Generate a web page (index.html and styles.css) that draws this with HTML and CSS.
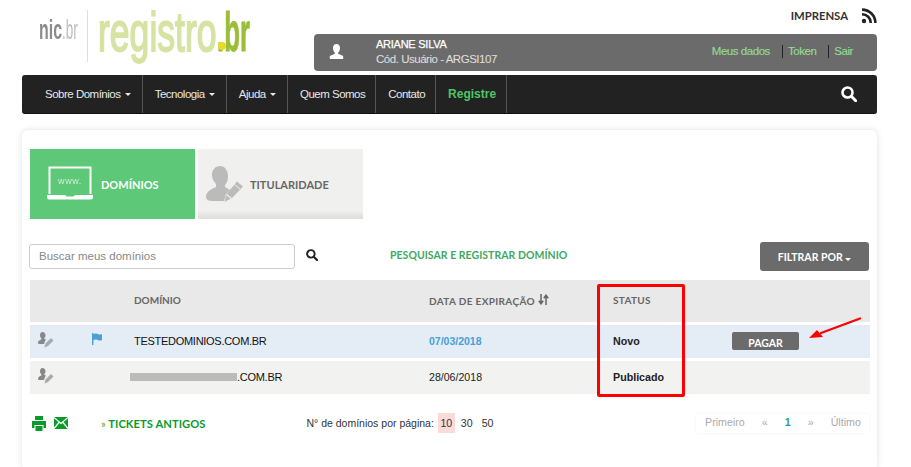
FILE: index.html
```html
<!DOCTYPE html>
<html lang="pt-BR">
<head>
<meta charset="utf-8">
<title>Registro.br</title>
<link rel="stylesheet" href="styles.css">
</head>
<body>
<div class="page">
  <header class="top">
    <div class="logo" aria-label="nic.br registro.br">
      <span class="lg-box w-nic"><span class="lg l-nic">nic</span></span>
      <span class="lg-box w-nicbr"><span class="lg l-nicbr">.br</span></span>
      <i class="l-div"></i>
      <span class="lg-box w-reg"><span class="lg l-reg">registro</span></span>
      <span class="lg-box w-br"><span class="lg l-br">.br</span><i class="l-dot"></i></span>
    </div>
    <div class="top-right">
      <div class="press">
        <span>IMPRENSA</span>
        <svg width="16" height="16" viewBox="0 0 16 16"><circle cx="3" cy="13" r="2.2" fill="#222"/><path d="M1 6.200a8.800 8.800 0 0 1 8.800 8.800" fill="none" stroke="#222" stroke-width="2.600"/><path d="M1 1.600A13.400 13.400 0 0 1 14.400 15" fill="none" stroke="#222" stroke-width="2.600"/></svg>
      </div>
      <div class="user">
        <svg class="user-icon" width="15" height="15" viewBox="0 0 15 15"><path d="M7.500 0C5 0 4 2 4 4.200c0 1.800.8 3.300 1.800 4.200v1.300L.8 12v3h13.400v-3l-5-2.300V8.400C10.200 7.500 11 6 11 4.200 11 2 10 0 7.500 0z" fill="#fff"/></svg>
        <div class="user-id">
          <strong>ARIANE SILVA</strong>
          <span>Cód. Usuário - ARGSI107</span>
        </div>
        <nav class="user-links">
          <a class="u-link">Meus dados</a>
          <a class="u-link u-sep">Token</a>
          <a class="u-link u-sep">Sair</a>
        </nav>
      </div>
    </div>
  </header>

  <nav class="main-nav">
    <a class="nav-item has-caret first">Sobre Domínios <i class="caret"></i></a>
    <a class="nav-item has-caret">Tecnologia <i class="caret"></i></a>
    <a class="nav-item has-caret">Ajuda <i class="caret"></i></a>
    <a class="nav-item">Quem Somos</a>
    <a class="nav-item">Contato</a>
    <a class="nav-item reg">Registre</a>
    <svg class="nav-search" width="16" height="16" viewBox="0 0 16 16"><circle cx="6.500" cy="6.500" r="5" fill="none" stroke="#fff" stroke-width="2.600"/><path d="M10.300 10.300l4.400 4.400" stroke="#fff" stroke-width="3" stroke-linecap="round"/></svg>
  </nav>

  <main class="card">
    <div class="tabs">
      <a class="tab tab-on">
        <svg width="48" height="36" viewBox="0 0 48 36"><path d="M3.500 28V1.500h41V28" fill="none" stroke="#fff" stroke-width="2"/><path d="M1 29h18l1.500 1.500h7L29 29h18v2.500q0 2-2 2H3q-2 0-2-2z" fill="#fff"/><text class="www" x="24" y="18" text-anchor="middle">www.</text></svg>
        <span>DOMÍNIOS</span>
      </a>
      <a class="tab tab-off">
        <svg width="37" height="37" viewBox="0 0 37 37"><path d="M14 0c-5 0-8 4-8 9 0 4 2 7 4 9v3C6 23 0 25 0 31c0 3 3 4 7 4h11l2-7 4-4-5-3v-2c2-2 3-5 3-9 0-5-3-10-8-10z" fill="#bbb"/><path d="M18.500 36l2-8L31 15.500l6 5L26 32z" fill="#bbb"/><path d="M20.500 28.500l5 4" stroke="#f0f0ee" stroke-width="1.200"/><path d="M28.500 18.500l5.500 4.500" stroke="#f0f0ee" stroke-width="1"/></svg>
        <span>TITULARIDADE</span>
      </a>
    </div>

    <div class="tools">
      <input class="search" placeholder="Buscar meus domínios" aria-label="Buscar meus domínios">
      <svg class="tool-search" width="12" height="12" viewBox="0 0 16 16"><circle cx="6.500" cy="6.500" r="5" fill="none" stroke="#222" stroke-width="2.600"/><path d="M10.300 10.300l4.400 4.400" stroke="#222" stroke-width="3" stroke-linecap="round"/></svg>
      <a class="find">PESQUISAR E REGISTRAR DOMÍNIO</a>
      <button class="filter">FILTRAR POR <i class="caret"></i></button>
    </div>

    <div class="table">
      <div class="row head">
        <div class="c-a"></div><div class="c-b"></div>
        <div class="c-d">DOMÍNIO</div>
        <div class="c-e h-date">DATA DE EXPIRAÇÃO <svg width="11" height="11" viewBox="0 0 11 11"><path d="M3 0v9M.8 6.800 3 9.800l2.200-3M8 11V2M5.800 4.200 8 1.200l2.200 3" fill="none" stroke="#666" stroke-width="1.500"/></svg></div>
        <div class="c-s h-status">STATUS</div>
        <div class="c-p"></div>
      </div>
      <div class="row r1">
        <div class="c-a"><svg class="mini" width="16" height="16" viewBox="0 0 16 16"><path d="M4.500 0C2.800 0 2 1.400 2 3.200c0 1.300.6 2.400 1.300 3V7.500C1.800 8.200 0 9 0 10.800c0 .8.600 1.200 1.500 1.200H6l1-3 1-1.200-1.900-1.300V6.200C7 5.500 7.500 4.500 7.500 3.200 7.500 1.400 6.300 0 4.500 0z" fill="#888"/><path d="M6.500 15.500l1-4L13 6l2.500 2.500L10 14z" fill="#aaa"/></svg></div>
        <div class="c-b"><svg width="12" height="12" viewBox="0 0 12 12"><path d="M1 0h1.400v12H1zM2.400 1Q5 0 7 1t4 0v6q-2 1-4 0T2.400 7z" fill="#4a9fd8"/></svg></div>
        <div class="c-d dom">TESTEDOMINIOS.COM.BR</div>
        <div class="c-e date-new">07/03/2018</div>
        <div class="c-s st">Novo</div>
        <div class="c-p"><button class="pay">PAGAR</button></div>
      </div>
      <div class="row r2">
        <div class="c-a"><svg class="mini" width="16" height="16" viewBox="0 0 16 16"><path d="M4.500 0C2.800 0 2 1.400 2 3.200c0 1.300.6 2.400 1.300 3V7.500C1.800 8.200 0 9 0 10.800c0 .8.600 1.200 1.500 1.200H6l1-3 1-1.200-1.900-1.300V6.200C7 5.500 7.500 4.500 7.500 3.200 7.500 1.400 6.300 0 4.500 0z" fill="#888"/><path d="M6.500 15.500l1-4L13 6l2.500 2.500L10 14z" fill="#aaa"/></svg></div>
        <div class="c-b"></div>
        <div class="c-d dom"><i class="redact"></i>.COM.BR</div>
        <div class="c-e">28/06/2018</div>
        <div class="c-s st">Publicado</div>
        <div class="c-p"></div>
      </div>
    </div>

    <div class="foot">
      <svg width="14" height="15" viewBox="0 0 14 15"><path d="M3 0h8v4H3zM0 5h14v7h-2.500V9h-9v3H0zM3.500 10h7v5h-7z" fill="#0a9a2c"/></svg>
      <svg class="f-mail" width="14" height="12" viewBox="0 0 14 12"><path d="M0 0h14v12H0z" fill="#0a9a2c"/><path d="M0 .5l7 6 7-6M0 11.500l5-6M14 11.500l-5-6" fill="none" stroke="#fff" stroke-width="1.200"/></svg>
      <a class="tickets"><b class="raquo">»</b> TICKETS ANTIGOS</a>
      <div class="per">
        <span>N° de domínios por página:</span>
        <a class="p-n p-on">10</a><a class="p-n">30</a><a class="p-n">50</a>
      </div>
      <div class="pager">
        <a>Primeiro</a><a class="pg-a">«</a><a class="pg-c">1</a><a class="pg-a">»</a><a>Último</a>
      </div>
    </div>
  </main>

  <div class="mark" aria-hidden="true"></div>
  <svg class="arrow" width="60" height="30" viewBox="0 0 60 30" aria-hidden="true"><path d="M51 2.500 12 17" stroke="#f00" stroke-width="2.400" fill="none" stroke-linecap="round"/><path d="M0 22 8 14l6 7z" fill="#f00"/></svg>
</div>
</body>
</html>
```
FILE: styles.css
```css
* { box-sizing: border-box; }
html, body { margin: 0; height: 467px; overflow: hidden; background: #fff; }
body { font-family: "Liberation Sans", Arial, sans-serif; font-size: 12px; color: #222; }
a { text-decoration: none; color: inherit; }
i { font-style: normal; }
.page { position: relative; width: 911px; height: 467px; padding: 0 34px 0 22px; }

.top { display: flex; height: 71px; }
.logo { flex: none; width: 248px; height: 62px; margin-left: 17px; display: flex; align-items: flex-start; filter: blur(.35px); }
.lg-box { position: relative; display: block; flex: none; height: 62px; }
.lg { display: block; position: absolute; left: 0; white-space: nowrap; transform-origin: 0 0; line-height: 1; }
.w-nic { width: 23px; }
.w-nicbr { width: 16px; }
.w-reg { width: 119px; }
.w-br { width: 33px; }
.l-nic { top: 17px; font: bold 27px/1 "Liberation Sans", sans-serif; color: #8b8b8b; transform: scaleX(.59); }
.l-nicbr { top: 17px; font: 27px/1 "Liberation Sans", sans-serif; color: #bdbdbd; transform: scaleX(.5); }
.l-div { flex: none; width: 1px; height: 52px; margin: 10px 10px 0 9px; background: #dedede; }
.l-reg { top: 4px; font: 56px/1 "Liberation Sans", sans-serif; color: #d6e3a3; -webkit-text-stroke: 1.800px #d6e3a3; transform: scaleX(.635); }
.l-br { top: 4px; font: bold 56px/1 "Liberation Sans", sans-serif; color: #9bbd38; -webkit-text-stroke: .8px #9bbd38; transform: scaleX(.46); }
.l-dot { position: absolute; left: 1px; top: 42px; width: 8px; height: 8px; border-radius: 50%; background: #e6dc2e; }
.top-right { flex: 1; margin-left: 27px; display: flex; flex-direction: column; }
.press { height: 34px; display: flex; justify-content: flex-end; gap: 13px; padding-top: 8px; font: bold 11.300px Lato, sans-serif; color: #333; }
.press span { margin-top: 1px; }
.user { height: 37px; background: #6b6b6b; border-radius: 4px; display: flex; align-items: center; color: #fff; padding: 0 24px 0 15px; }
.user-icon { flex: none; margin-top: -3px; }
.user-id { margin-left: 32px; display: flex; flex-direction: column; line-height: 15px; margin-top: -1px; }
.user-id strong { font-weight: normal; -webkit-text-stroke: .25px #fff; font-size: 11px; letter-spacing: -.25px; }
.user-id span { color: #e0e0e0; font-size: 11.500px; letter-spacing: -.47px; }
.user-links { margin-left: auto; display: flex; color: #93dc93; font-size: 11.500px; margin-top: -2px; letter-spacing: -.45px; -webkit-text-stroke: .15px #93dc93; }
.u-sep { border-left: 1px solid #222; margin-left: 12px; padding-left: 5px; line-height: 13px; }

.main-nav { margin-top: 4px; height: 39px; width: 855px; background: #222; border-radius: 3px; display: flex; align-items: stretch; border-bottom: 1px solid #111; }
.nav-item { display: flex; align-items: center; gap: 1.500px; padding: 0 10px 0 12px; color: #e8e8e8; font-size: 11.500px; letter-spacing: -.5px; border-right: 1px solid #555; white-space: pre; }
.has-caret { padding-right: 11px; }
.nav-item.first { padding-left: 23px; }
.nav-item.reg { color: #4fc565; font-weight: bold; font-size: 12px; letter-spacing: 0; }
.caret { display: inline-block; width: 0; height: 0; border: 3px solid transparent; border-top-color: currentColor; border-bottom-width: 0; }
.nav-search { margin: 11px 20px 0 auto; }

.card { margin-top: 16px; width: 855px; height: 340px; background: #fff; border-radius: 6px; box-shadow: 0 0 6px rgba(0,0,0,.13); padding: 19px 7px 0 8px; }
.tabs { display: flex; gap: 3px; }
.tab { width: 165px; height: 70px; display: flex; align-items: center; font: bold 11px Lato, sans-serif; }
.tab-on { background: #5cc878; color: #fff; padding-left: 16px; gap: 7px; }
.tab-off { background: linear-gradient(#f0f0ee 88%, #dcdcda); color: #666; padding-left: 8px; gap: 7px; }
.www { font: 9px "Liberation Sans", sans-serif; fill: #fff; opacity: .7; letter-spacing: .6px; }

.tools { margin-top: 23px; display: flex; align-items: center; height: 29px; }
.search { width: 266px; height: 25px; margin: -1px 0 0 -1px; border: 1px solid #ccc; border-radius: 3px; padding: 0 9px; font: 11.500px "Liberation Sans", sans-serif; }
.search::placeholder { color: #888; opacity: 1; }
.tool-search { margin: -3px 0 0 11px; }
.find { margin: -3px 0 0 72px; font: bold 10.500px Lato, sans-serif; color: #3fa862; letter-spacing: .03px; }
.filter { margin-left: auto; margin-right: 1px; width: 109px; height: 29px; border: 0; border-radius: 3px; background: #6b6b6b; color: #fff; font: bold 10.500px Lato, sans-serif; padding: 0; }

.table { margin-top: 9px; display: flex; flex-direction: column; gap: 3px; }
.row { display: flex; align-items: center; height: 33px; width: 840px; padding-bottom: 1px; }
.head { height: 42px; background: #e9e9e9; font: bold 10px Lato, sans-serif; color: #666; padding-bottom: 2px; }
.r1 { background: #e4ecf6; }
.r2 { background: #f2f2f0; }
.c-a { width: 61px; padding-left: 8px; }
.c-b { width: 43px; }
.c-d { width: 295px; }
.c-e { width: 184px; font-size: 10.600px; }
.c-s { width: 119px; }
.c-p { flex: 1; }
.c-e.h-date { font-size: 10px; letter-spacing: .35px; }
.h-status { letter-spacing: .3px; }
.mini { display: block; margin-top: -2px; }
.r1 .c-b svg { display: block; margin-top: -4px; }
.dom { color: #111; font-size: 11px; letter-spacing: -.28px; white-space: pre; }
.c-e.date-new { color: #4a9fd8; font-weight: bold; font-size: 10.500px; }
.st { font-weight: bold; font-size: 10.700px; color: #222; }
.pay { display: block; width: 67px; height: 18px; border: 0; border-radius: 2px; background: #6b6b6b; color: #fff; font: bold 10.500px Lato, sans-serif; padding: 3px 0 0; }
.redact { display: inline-block; width: 107px; height: 8px; margin-left: -4px; background: #bbb; filter: blur(.7px); }

.foot { margin-top: 19px; display: flex; align-items: center; height: 20px; width: 840px; padding-left: 2px; }
.f-mail { margin-left: 8px; }
.tickets { margin-left: 33px; font: bold 11.200px Lato, sans-serif; color: #0a9a2c; letter-spacing: .05px; }
.raquo { color: #7a9a20; font-weight: normal; }
.per { margin-left: 101px; display: flex; align-items: center; font-size: 10.500px; color: #333; }
.p-n { padding: 3px 3px; height: 20px; margin-right: 3px; line-height: 15px; color: #333; font-size: 10.600px; }
.p-on { background: #fbdada; margin-left: 4px; width: 17px; padding: 3px 0 0; text-align: center; }
.pager { margin-left: auto; margin-right: 1px; height: 19px; width: 173px; display: flex; justify-content: space-between; align-items: center; padding: 0 8px 2px 9px; color: #aaa; font-size: 10.700px; box-shadow: 0 0 3px rgba(0,0,0,.06); border-radius: 3px; }
.pg-c { color: #2a9d8f; font-weight: bold; }

.mark { position: absolute; left: 597px; top: 284px; width: 88px; height: 113px; border: 3px solid #f00; border-radius: 2px; }
.arrow { position: absolute; left: 809px; top: 316px; }
```
